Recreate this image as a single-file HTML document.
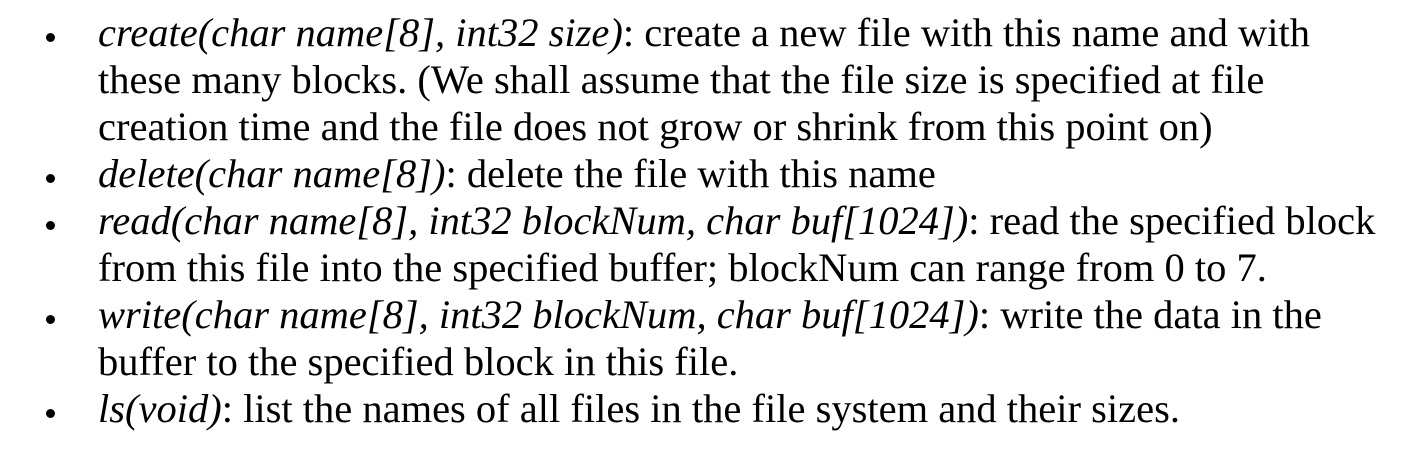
<!DOCTYPE html>
<html><head><meta charset="utf-8"><style>
html,body{margin:0;padding:0;background:#fff;width:1418px;height:454px;overflow:hidden}
body{font-family:"Liberation Serif",serif;font-size:40.5px;line-height:47px;color:#000}
ul{margin:0;padding:0;list-style:none;position:absolute;top:9px;left:0}
li{position:relative;padding-left:98px;width:1320px;white-space:nowrap}
li:before{content:"";position:absolute;left:46px;top:24px;width:9px;height:9px;border-radius:50%;background:#000}
i{font-style:italic}
</style></head><body>
<ul>
<li><i>create(char name[8], int32 size)</i>: create a new file with this name and with<br>these many blocks. (We shall assume that the file size is specified at file<br>creation time and the file does not grow or shrink from this point on)</li>
<li><i>delete(char name[8])</i>: delete the file with this name</li>
<li><i>read(char name[8], int32 blockNum, char buf[1024])</i>: read the specified block<br>from this file into the specified buffer; blockNum can range from 0 to 7.</li>
<li><i>write(char name[8], int32 blockNum, char buf[1024])</i>: write the data in the<br>buffer to the specified block in this file.</li>
<li><i>ls(void)</i>: list the names of all files in the file system and their sizes.</li>
</ul>
</body></html>
